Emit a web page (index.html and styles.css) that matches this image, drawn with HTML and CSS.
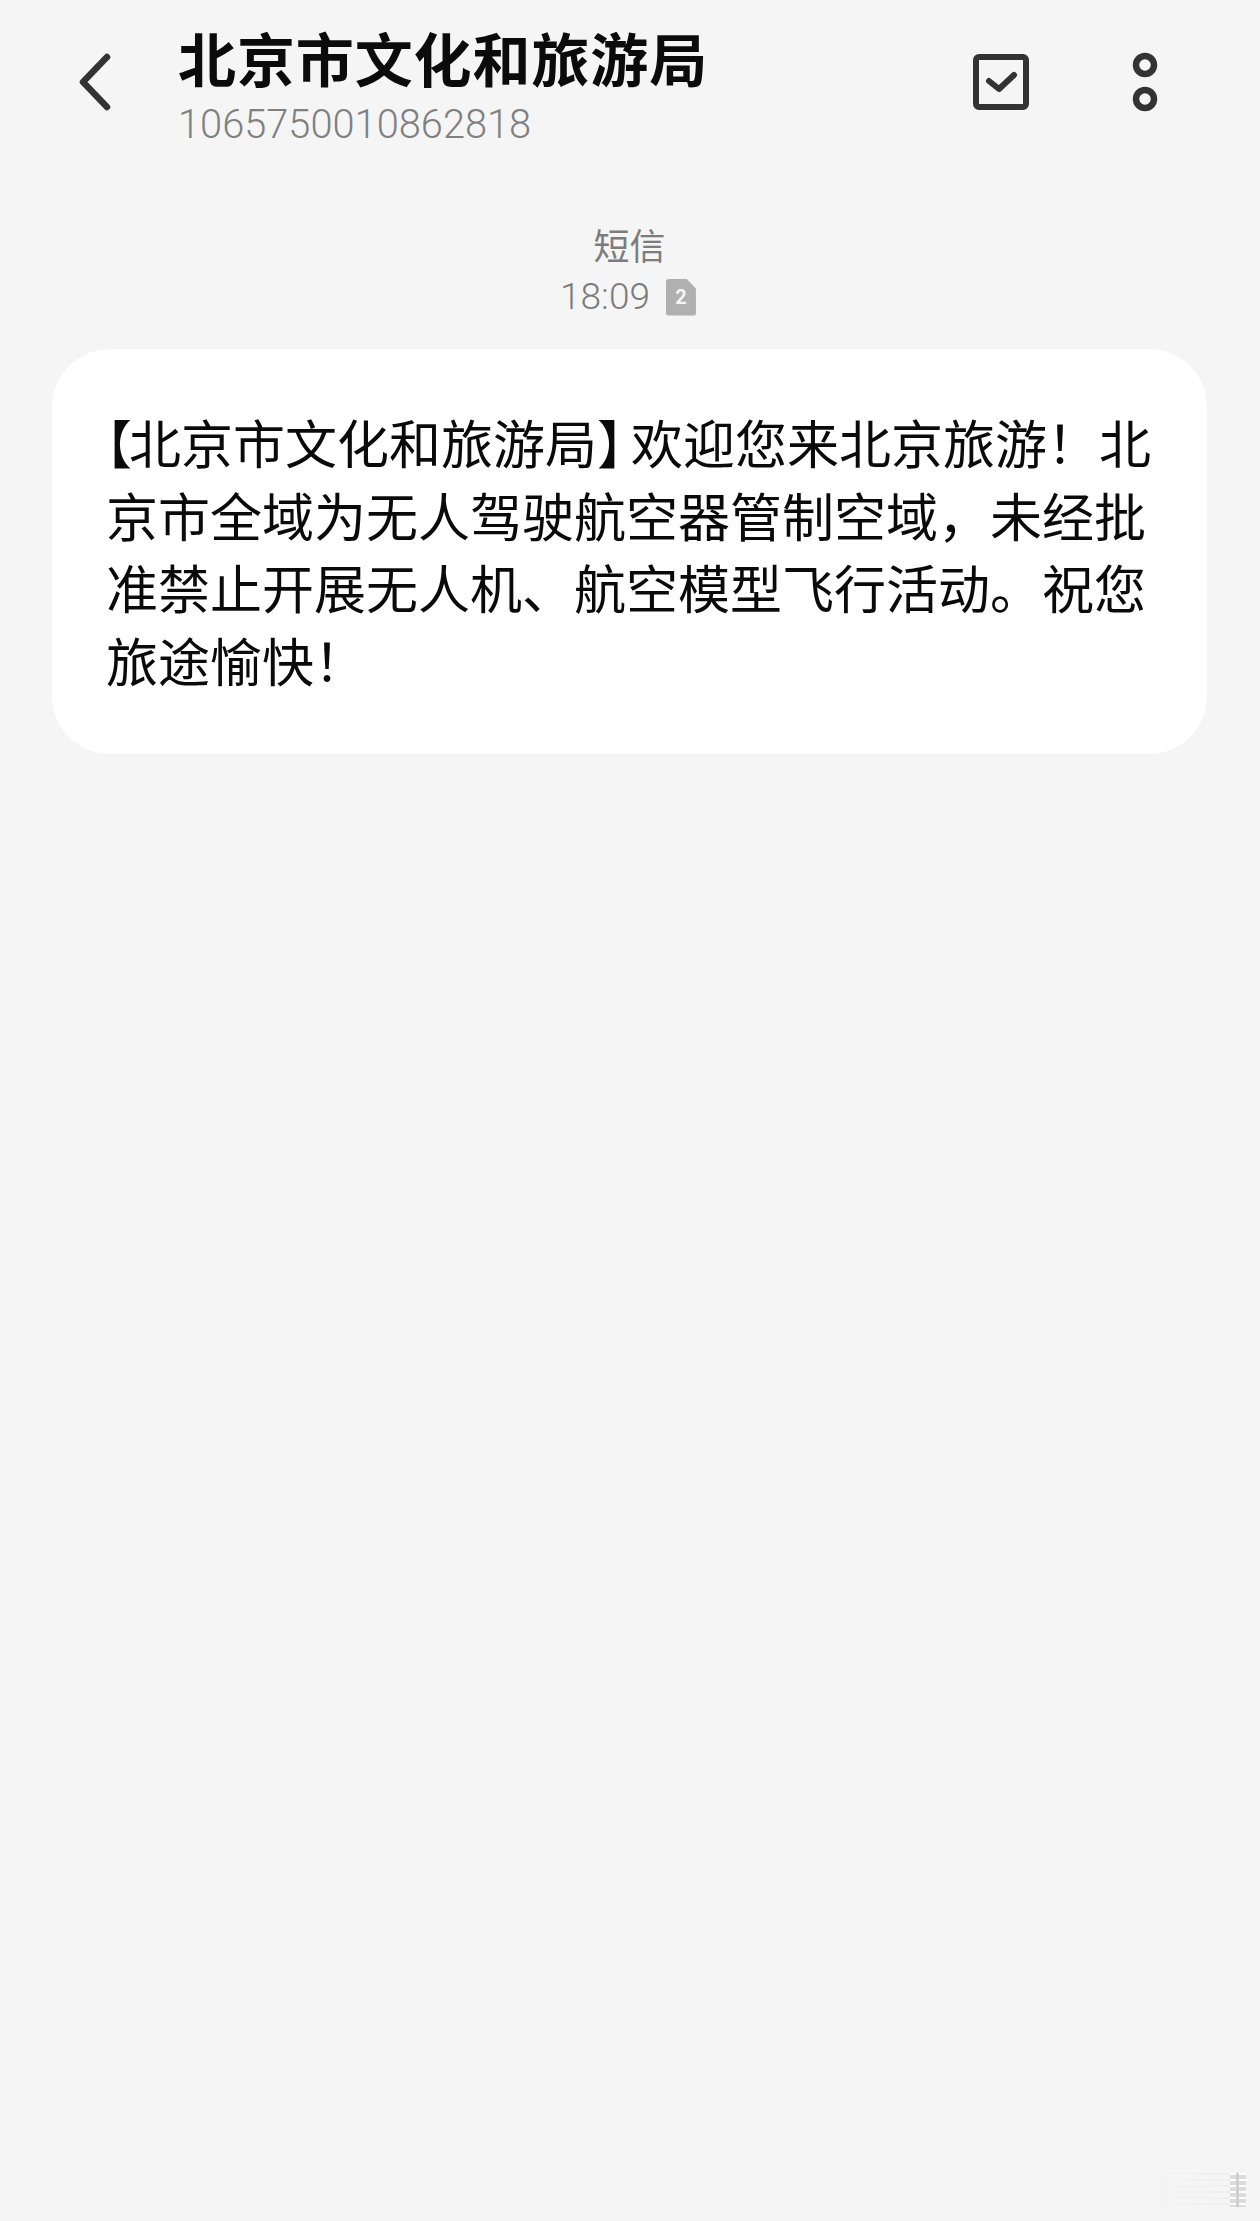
FILE: index.html
```html
<!DOCTYPE html>
<html lang="zh">
<head>
<meta charset="utf-8">
<title>北京市文化和旅游局</title>
<link rel="stylesheet" href="styles.css">
</head>
<body>
<div class="screen">
  <header class="topbar">
    <svg class="back" viewBox="0 0 34 58" width="34" height="58"><path d="M29 4 5 29l24 25"/></svg>
    <div class="heading">
      <h1 class="title">北京市文化和旅游局</h1>
      <div class="number">1065750010862818</div>
    </div>
    <svg class="check" viewBox="0 0 56 56" width="56" height="56"><rect x="3" y="3" width="50" height="50" rx="3"/><path d="M16 27l10 8 15-14"/></svg>
    <svg class="more" viewBox="0 0 26 60" width="26" height="60"><circle cx="13" cy="13" r="9"/><circle cx="13" cy="47" r="9"/></svg>
  </header>
  <div class="meta">
    <div class="kind">短信</div>
    <div class="time-row">
      <span class="time">18:09</span>
      <span class="sim">2</span>
    </div>
  </div>
  <div class="bubble">
    <div class="line line-first"><span class="bracket-open">【</span><span>北京市文化和旅游局</span><span class="bracket-close">】</span><span>欢迎您来北京旅游！北</span></div>
    <div class="line">京市全域为无人驾驶航空器管制空域，未经批</div>
    <div class="line">准禁止开展无人机、航空模型飞行活动。祝您</div>
    <div class="line">旅途愉快！</div>
  </div>
  <div class="watermark" aria-hidden="true"><span class="wm-lines"></span><span class="wm-glyph"></span></div>
</div>
</body>
</html>
```
FILE: styles.css
```css
* { box-sizing: border-box; }
html, body { margin: 0; padding: 0; }
body {
  background: #f5f5f5;
  font-family: "Noto Sans CJK SC", "Roboto", sans-serif;
}
.screen {
  position: relative;
  width: 1260px;
  height: 2221px;
  overflow: hidden;
  padding: 0 53px 0 52px;
}
.topbar {
  display: flex;
  align-items: flex-start;
  height: 220px;
  padding-left: 26px;
}
.back {
  flex: none;
  margin-top: 53px;
  fill: none;
  stroke: #333;
  stroke-width: 6.5;
  stroke-linecap: round;
  stroke-linejoin: round;
}
.heading {
  flex: 1;
  margin-left: 66px;
  padding-top: 17px;
}
.title {
  margin: 0;
  font-size: 58px;
  line-height: 80px;
  font-weight: 700;
  color: #0b0b0b;
  letter-spacing: 0.9px;
}
.number {
  margin-top: 5px;
  font-family: "Roboto", sans-serif;
  font-weight: 300;
  font-size: 39.8px;
  line-height: 46px;
  color: #808080;
}
.check {
  flex: none;
  margin-top: 54px;
  fill: none;
  stroke: #333;
  stroke-width: 6;
  stroke-linecap: round;
  stroke-linejoin: round;
}
.more {
  flex: none;
  margin: 52px 49px 0 103px;
  fill: none;
  stroke: #333;
  stroke-width: 6.5;
}
.meta {
  display: flex;
  flex-direction: column;
  align-items: center;
  color: #7c7c7c;
}
.kind {
  font-size: 36px;
  line-height: 49px;
  font-weight: 400;
  margin-bottom: 3px;
}
.time-row {
  display: flex;
  align-items: center;
  gap: 16px;
  height: 50px;
  padding-right: 3px;
}
.time {
  font-family: "Roboto", sans-serif;
  font-weight: 300;
  font-size: 37px;
  line-height: 50px;
}
.sim {
  width: 30px;
  height: 37px;
  background: #b0b0b0;
  color: #f5f5f5;
  font-family: "Roboto", sans-serif;
  font-weight: 700;
  font-size: 20px;
  line-height: 37px;
  text-align: center;
  border-radius: 3px;
  clip-path: polygon(0 0, 68% 0, 100% 28%, 100% 100%, 0 100%);
}
.bubble {
  margin-top: 27px;
  height: 405px;
  padding: 57px 54px 0;
  background: #fff;
  border-radius: 58px;
  color: #0a0a0a;
  font-size: 52px;
  line-height: 72.7px;
  font-weight: 400;
}
.line {
  white-space: nowrap;
}
.bracket-open {
  font-feature-settings: "halt";
  margin-right: -3px;
}
.bracket-close {
  font-feature-settings: "halt";
  margin-right: 8px;
}
.watermark {
  position: absolute;
  right: 14px;
  bottom: 14px;
  width: 88px;
  height: 34px;
  display: flex;
  justify-content: flex-end;
}
.wm-lines {
  flex: 1;
  background: repeating-linear-gradient(to bottom, #eeeeee 0 2px, #f5f5f5 2px 6px);
  -webkit-mask-image: linear-gradient(to right, transparent, #000);
  mask-image: linear-gradient(to right, transparent, #000);
}
.wm-glyph {
  width: 16px;
  background:
    linear-gradient(to right, transparent 6px, #cfcfcf 6px 9px, transparent 9px),
    repeating-linear-gradient(to bottom, #ffffff 0 2px, #dcdcdc 2px 6px);
}
```
